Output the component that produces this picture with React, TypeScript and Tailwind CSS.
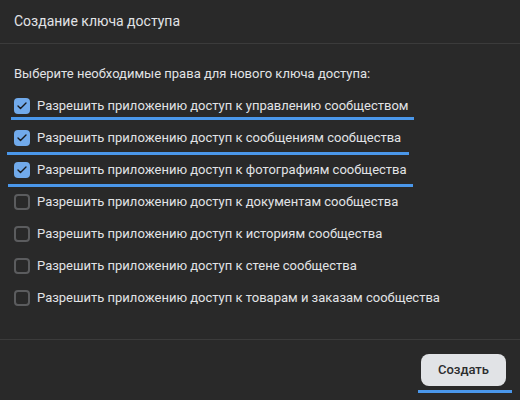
import { Check } from 'lucide-react';

const PERMISSIONS = [
  { label: 'Разрешить приложению доступ к управлению сообществом', checked: true, mark: 'left-[-3px] w-[403px] top-[27px]' },
  { label: 'Разрешить приложению доступ к сообщениям сообщества', checked: true, mark: 'left-[-7px] w-[402px] top-[30px]' },
  { label: 'Разрешить приложению доступ к фотографиям сообщества', checked: true, mark: 'left-[-6px] w-[405px] top-[30px]' },
  { label: 'Разрешить приложению доступ к документам сообщества', checked: false },
  { label: 'Разрешить приложению доступ к историям сообщества', checked: false },
  { label: 'Разрешить приложению доступ к стене сообщества', checked: false },
  { label: 'Разрешить приложению доступ к товарам и заказам сообщества', checked: false },
];

function PermissionRow({ label, checked, mark }: { label: string; checked: boolean; mark?: string }) {
  return (
    <div className="relative flex h-8 items-center gap-[7px]">
      {checked ? (
        <span className="flex h-4 w-4 items-center justify-center rounded-[4px] bg-[#71aaeb]">
          <Check className="h-3 w-3 text-[#19191a]" strokeWidth={2.75} />
        </span>
      ) : (
        <span className="h-4 w-4 rounded-[4px] border-2 border-[#5b5c5e]" />
      )}
      <span className="text-[13px] text-[#e1e3e6]">{label}</span>
      {/* hand-drawn highlight */}
      {mark && <span className={`absolute h-[3px] bg-[#4a97ea] ${mark}`} />}
    </div>
  );
}

export default function App() {
  return (
    <div className="flex h-[400px] w-[520px] flex-col bg-[#292929] font-['Roboto',sans-serif]">
      <div className="flex h-[44px] items-center border-b border-[#3b3b3b] px-[14px]">
        <span className="text-[14px] text-[#e1e3e6]">Создание ключа доступа</span>
      </div>

      <div className="flex flex-1 flex-col px-[14px] pt-[21px]">
        <p className="mb-[7px] text-[13px] leading-[18px] text-[#e1e3e6]">
          Выберите необходимые права для нового ключа доступа:
        </p>
        {PERMISSIONS.map(p => (
          <PermissionRow key={p.label} {...p} />
        ))}
      </div>

      <div className="flex justify-end border-t border-[#3b3b3b] px-[14px] pb-[14px] pt-[14px]">
        <div className="relative">
          <button className="h-8 rounded-[8px] bg-[#e1e3e6] px-[17px] text-[13px] font-medium text-[#2c2d2e]">
            Создать
          </button>
          <span className="absolute left-[-3px] top-[36px] h-[3px] w-[94px] bg-[#4a97ea]" />
        </div>
      </div>
    </div>
  );
}
